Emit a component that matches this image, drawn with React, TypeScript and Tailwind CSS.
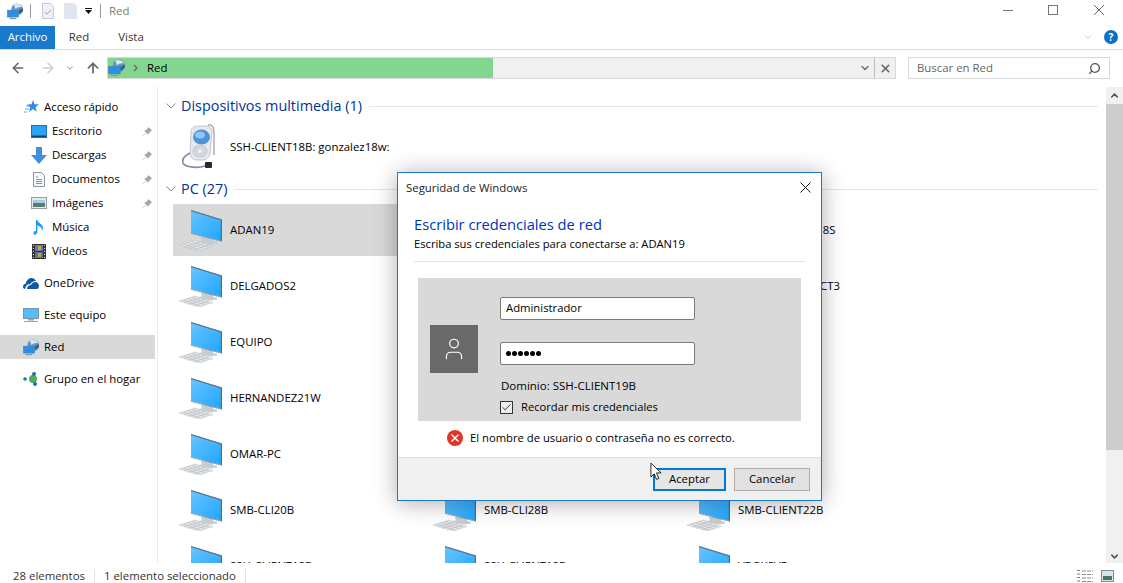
import { ArrowLeft, ArrowRight, ArrowUp, Check, ChevronDown, ChevronUp, Search, User, X } from 'lucide-react';

const font = "font-['Open_Sans','Noto_Sans',sans-serif]";

const NetIcon = ({ size = 20 }: { size?: number }) => (
  <svg width={size} height={size} viewBox="0 0 20 20" className="shrink-0">
    <circle cx="12" cy="7.500" r="7" fill="#5f97c6" />
    <path d="M8 2c3-2 8-1 10 3-3-1-6 0-8 2z" fill="#d8e7f3" />
    <path d="M12 10l6-4 1 3-4 4z" fill="#2f6496" />
    <rect x="0.500" y="8.500" width="13" height="8" fill="#2492ea" stroke="#58809f" strokeWidth="0.800" />
    <rect x="3" y="17.500" width="8" height="1.500" fill="#7f98ad" />
  </svg>
);

const PcIcon = () => (
  <svg width="44" height="41" viewBox="0 0 44 41" className="shrink-0">
    <defs>
      <linearGradient id="pcScreen" x1="0" y1="0" x2="1" y2="1">
        <stop offset="0" stopColor="#69c4ff" />
        <stop offset="1" stopColor="#1ea6ff" />
      </linearGradient>
    </defs>
    <path d="M22 27h12v4l4 1v1.500l-6 1-13-2.500v-1l4-.5z" fill="#c6ccd1" />
    <path d="M12 0l31 9.500V31L12 23z" fill="url(#pcScreen)" />
    <path d="M12 0l31 9.500v1.200L12 1.200z" fill="#67747f" />
    <path d="M43 9.500V31l-1.200-.3V10z" fill="#5d6b76" />
    <path d="M12 23l31 8v.8L12 23.800z" fill="#7d8b96" />
    <path d="M0 35l16-5 18 6.500-13 4.500z" fill="#e3e5e7" stroke="#bcc1c5" strokeWidth="0.500" />
    <path d="M4 33.800l18 6.200M8 32.500l18 6.200M12 31.300l18 6.200M5 37l16-5M9 38.500l16-5M14 40l16-5" stroke="#aeb3b7" strokeWidth="0.500" />
  </svg>
);

const PhoneIcon = () => (
  <svg width="38" height="47" viewBox="0 0 38 47" className="shrink-0">
    <path d="M26 1c5-1 6 3 6 8v22" fill="none" stroke="#a09db9" strokeWidth="1.300" />
    <path d="M9 8c0-4 3-6 7-6h8c4 0 6 2 6 6l-2 21c0 4-4 7-8 7h-5c-4 0-7-3-7-7z" fill="#e6e8ec" stroke="#aab1bb" strokeWidth="0.700" />
    <ellipse cx="19.500" cy="13" rx="8.500" ry="7.500" fill="#4f92dc" />
    <ellipse cx="18" cy="11" rx="5" ry="3.500" fill="#98c6f2" />
    <ellipse cx="18" cy="27" rx="7" ry="6" fill="#d3d7db" stroke="#b7bcc1" strokeWidth="0.700" />
    <circle cx="18" cy="27" r="2" fill="#eef0f2" />
    <path d="M8 29C2 32 0 36 1 39c2 5 16 5 22 3" fill="none" stroke="#8c88a8" strokeWidth="1.800" />
    <rect x="23" y="38" width="7" height="6" rx="1" fill="#2a2a2a" />
  </svg>
);

const Pin = () => (
  <svg width="11" height="11" viewBox="0 0 12 12" className="shrink-0">
    <path d="M7 1l4 4-1.200.4-2.400 2.400-.2 2L5 7.400 1.400 11 1 10.600 4.600 7 2.200 4.800l2-.2 2.400-2.400z" fill="#a2a6aa" />
  </svg>
);

const StarIcon = () => (
  <svg width="15" height="14" viewBox="0 0 15 14" className="shrink-0">
    <path d="M9 0l1.500 4.200 4.500.2-3.500 2.800 1.200 4.500-3.800-2.600L5 12l1.300-4.600L3 4.600l4.500-.3z" fill="#2f8be6" />
    <path d="M2 6h3M1 9h4M0 12h3" stroke="#5ea9ee" strokeWidth="1" />
  </svg>
);

const DesktopIcon = () => (
  <svg width="16" height="13" viewBox="0 0 16 13" className="shrink-0">
    <rect x="0.500" y="0.500" width="15" height="12" fill="#29a4f2" stroke="#1f6eb5" />
    <rect x="1" y="10.500" width="14" height="1.500" fill="#17466e" />
  </svg>
);

const DownIcon = () => (
  <svg width="16" height="17" viewBox="0 0 16 17" className="shrink-0">
    <path d="M5 0h6v8h5l-8 9-8-9h5z" fill="#3f8fdc" />
  </svg>
);

const DocIcon = () => (
  <svg width="12" height="15" viewBox="0 0 12 15" className="shrink-0">
    <path d="M.5.5h8l3 3v11H.5z" fill="#f7f9fb" stroke="#8f979e" />
    <path d="M3 5h2M3 7.500h6M3 9.500h6M3 11.500h6" stroke="#5a9bd6" />
  </svg>
);

const PicIcon = () => (
  <svg width="16" height="12" viewBox="0 0 16 12" className="shrink-0">
    <rect x="0.500" y="0.500" width="15" height="11" fill="#dfeaf2" stroke="#9a9fa3" />
    <path d="M2 3h12v3H2z" fill="#a8cbe0" />
    <path d="M2 6h12v4H2z" fill="#5d7d6f" />
  </svg>
);

const MusicIcon = () => (
  <svg width="12" height="16" viewBox="0 0 12 16" className="shrink-0">
    <path d="M3 1h1.400c.4 3 5.600 4 5.600 8 0 1-.4 2-1 2.600.3-3-2.200-4.600-4.600-5.200V13c0 2-2 3-3.400 2.600C.4 15 0 13.500 1.200 12.500c.6-.5 1.300-.6 1.800-.4z" fill="#1b9cf0" />
  </svg>
);

const FilmIcon = () => (
  <svg width="14" height="15" viewBox="0 0 14 15" className="shrink-0">
    <rect width="14" height="15" fill="#333" />
    <path d="M1 1h1v1H1zM1 4h1v1H1zM1 7h1v1H1zM1 10h1v1H1zM1 13h1v1H1zM12 1h1v1h-1zM12 4h1v1h-1zM12 7h1v1h-1zM12 10h1v1h-1zM12 13h1v1h-1z" fill="#ddd" />
    <rect x="3" y="1" width="8" height="6" fill="#6178b8" />
    <rect x="3" y="8" width="8" height="6" fill="#5a6fa8" />
    <rect x="6" y="2" width="3" height="4" fill="#c9a23a" />
    <rect x="6" y="9" width="3" height="4" fill="#c9a23a" />
  </svg>
);

const CloudIcon = () => (
  <svg width="16" height="11" viewBox="0 0 16 11" className="shrink-0">
    <path d="M0 9c0-2 1-3 2.500-3.300C3.500 2 6 0 8.500 0c2 0 3.500 1 4.500 3-3 0-5 1.500-6 3.500C5 6 3 6.500 2 11 .8 10.800 0 10 0 9z" fill="#0f5aa8" />
    <path d="M4 11c0-2.500 2-4 4-4 1-2 2.500-3 4.500-3 1.500 0 3.500 1.500 3.500 4 0 1.500-1 3-2 3z" fill="#0f5aa8" />
  </svg>
);

const ThisPcIcon = () => (
  <svg width="16" height="15" viewBox="0 0 16 15" className="shrink-0">
    <rect x="0.500" y="0.500" width="15" height="10" fill="#55bcf5" stroke="#7d93a5" />
    <rect x="5" y="11" width="6" height="1.500" fill="#9aa5ae" />
    <rect x="1" y="13" width="14" height="1" fill="#9aa5ae" />
  </svg>
);

const HomeGroupIcon = () => (
  <svg width="16" height="14" viewBox="0 0 16 14" className="shrink-0">
    <circle cx="2" cy="7" r="1.800" fill="#1c6fb8" />
    <circle cx="10" cy="7" r="4" fill="#4bb05a" />
    <circle cx="11" cy="2" r="2" fill="#1c6fb8" />
    <circle cx="12" cy="12" r="2" fill="#1c6fb8" />
  </svg>
);

const Tree = ({ icon, label, pinned, indent, active, className = '' }: { icon: React.ReactNode; label: string; pinned?: boolean; indent?: boolean; active?: boolean; className?: string }) => (
  <div className={`flex h-6 w-[155px] items-center ${active ? 'bg-[#d9d9d9]' : ''} ${className}`}>
    <div className={`flex w-4 shrink-0 items-center justify-center ${indent ? 'ml-[31px]' : 'ml-[23px]'}`}>{icon}</div>
    <span className={`ml-[5px] flex-1 text-[11.4px] text-black ${font}`}>{label}</span>
    {pinned && <span className="mr-[2px]"><Pin /></span>}
  </div>
);

const Computer = ({ name, selected }: { name: string; selected?: boolean }) => (
  <div className={`flex h-[52px] w-[254px] shrink-0 items-center pl-[6px] ${selected ? 'bg-[#d9d9d9]' : ''}`}>
    <PcIcon />
    <span className={`ml-[7px] whitespace-nowrap text-[11.4px] text-black ${font}`}>{name}</span>
  </div>
);

const GroupHeader = ({ label, y }: { label: string; y: string }) => (
  <div className={`mr-[25px] flex h-5 shrink-0 items-center ${y}`}>
    <svg width="10" height="6" viewBox="0 0 10 6" className="shrink-0"><path d="M.5.5L5 5 9.500.5" fill="none" stroke="#8a8a8a" /></svg>
    <span className={`ml-[5px] text-[14.4px] leading-5 text-[#003399] ${font}`}>{label}</span>
    <div className="ml-[7px] h-px flex-1 bg-[#e5e5e5]" />
  </div>
);

const rows = [
  ['ADAN19', '', 'SERVIDOR-SSH18S'],
  ['DELGADOS2', '', 'SERVIDOR-SSH-CT3'],
  ['EQUIPO', '', ''],
  ['HERNANDEZ21W', '', ''],
  ['OMAR-PC', '', ''],
  ['SMB-CLI20B', 'SMB-CLI28B', 'SMB-CLIENT22B'],
  ['SSH-CLIENT18B', 'SSH-CLIENT19B', 'VBOXSVR'],
];

export default function App() {
  return (
    <div className={`flex h-[583px] w-[1123px] flex-col overflow-hidden bg-white text-black ${font}`}>
      {/* barra de titulo */}
      <div className="flex h-[22px] shrink-0 items-center pl-[7px]">
        <NetIcon size={17} />
        <div className="ml-[6px] h-[14px] w-px bg-[#9a9a9a]" />
        <svg width="12" height="16" viewBox="0 0 12 16" className="ml-[11px]"><path d="M.5.5h8l3 3v12H.5z" fill="#eef2f7" stroke="#c0cad6" /><path d="M3 9l2 2 4-4" fill="none" stroke="#9aa7b5" /></svg>
        <svg width="13" height="16" viewBox="0 0 13 16" className="ml-[10px]"><path d="M0 0h10l3 3v13H0z" fill="#dfe6f1" /></svg>
        <svg width="7" height="6" viewBox="0 0 7 6" className="ml-[8px]"><path d="M0 0h7v1H0zM0 2h7L3.500 6z" fill="#111" /></svg>
        <div className="ml-[8px] h-[14px] w-px bg-[#9a9a9a]" />
        <span className="ml-2 text-[11.4px] text-[#7a7a7a]">Red</span>
        <div className="mb-[2px] ml-auto flex items-center pr-[19px]">
          <div className="h-px w-[10px] bg-[#777]" />
          <div className="ml-[35px] h-[10px] w-[10px] border border-[#777]" />
          <svg width="10" height="10" viewBox="0 0 10 10" className="ml-[36px]"><path d="M0 0l10 10M10 0L0 10" stroke="#666" /></svg>
        </div>
      </div>

      {/* cinta */}
      <div className="flex h-[28px] shrink-0 items-center border-b border-[#dcdcdc] pt-[3px]">
        <div className="flex h-[23px] w-[55px] items-center justify-center bg-[#1979ca] text-[11.4px] text-white">Archivo</div>
        <div className="w-[48px] text-center text-[11.4px] text-[#333]">Red</div>
        <div className="ml-[3px] w-[50px] text-center text-[11.4px] text-[#333]">Vista</div>
        <ChevronDown className="ml-auto h-[12px] w-[12px] text-[#aaa]" strokeWidth={1.200} />
        <div className="mr-[5px] ml-[10px] flex h-[14px] w-[14px] items-center justify-center rounded-full bg-[#0f6fc6] text-[10px] font-bold text-white">?</div>
      </div>

      {/* direcciones */}
      <div className="flex h-[36px] shrink-0 items-center">
        <ArrowLeft className="ml-[10px] h-[16px] w-[16px] text-[#666]" strokeWidth={2.200} />
        <ArrowRight className="ml-[14px] h-[16px] w-[16px] text-[#ccc]" strokeWidth={2.200} />
        <ChevronDown className="ml-[9px] h-[10px] w-[10px] text-[#777]" strokeWidth={2} />
        <ArrowUp className="ml-[10px] h-[16px] w-[16px] text-[#666]" strokeWidth={2.600} />
        <div className="ml-[6px] flex h-[22px] w-[789px] items-center border border-[#d9d9d9] bg-[#f0f0f0]">
          <div className="flex h-full w-[385px] items-center bg-[#83d68f]">
            <NetIcon size={18} />
            <svg width="5" height="8" viewBox="0 0 5 8" className="ml-[7px]"><path d="M1 1l3 3-3 3" fill="none" stroke="#666" strokeWidth="1.200" /></svg>
            <span className="ml-[9px] text-[11.4px] text-black">Red</span>
          </div>
          <ChevronDown className="mr-[3px] ml-auto h-[12px] w-[12px] text-[#666]" strokeWidth={2.600} />
          <div className="flex h-full w-[21px] items-center justify-center border-l border-[#bdbdbd]">
            <X className="h-[13px] w-[13px] text-[#666]" strokeWidth={3} />
          </div>
        </div>
        <div className="ml-[12px] flex h-[22px] w-[202px] items-center justify-between border border-[#d9d9d9] pr-[8px] pl-[8px] text-[11.4px] text-[#666]">
          <span>Buscar en Red</span>
          <Search className="h-[13px] w-[13px] -scale-x-100 text-[#555]" strokeWidth={2.400} />
        </div>
      </div>

      {/* cuerpo */}
      <div className="flex min-h-0 flex-1">
        <div className="flex w-[158px] shrink-0 flex-col border-r border-[#ececec] pt-[9px]">
          <Tree icon={<StarIcon />} label="Acceso rápido" />
          <Tree indent pinned icon={<DesktopIcon />} label="Escritorio" />
          <Tree indent pinned icon={<DownIcon />} label="Descargas" />
          <Tree indent pinned icon={<DocIcon />} label="Documentos" />
          <Tree indent pinned icon={<PicIcon />} label="Imágenes" />
          <Tree indent icon={<MusicIcon />} label="Música" />
          <Tree indent icon={<FilmIcon />} label="Vídeos" />
          <Tree className="mt-2" icon={<CloudIcon />} label="OneDrive" />
          <Tree className="mt-2" icon={<ThisPcIcon />} label="Este equipo" />
          <Tree className="mt-2" active icon={<NetIcon size={17} />} label="Red" />
          <Tree className="mt-2" icon={<HomeGroupIcon />} label="Grupo en el hogar" />
        </div>

        <div className="relative flex min-w-0 flex-1 flex-col overflow-hidden pl-[8px]">
          <GroupHeader y="mt-[10px]" label="Dispositivos multimedia (1)" />
          <div className="flex h-[62px] shrink-0 items-center pl-[16px]">
            <PhoneIcon />
            <span className="ml-[10px] text-[11.4px]">SSH-CLIENT18B: gonzalez18w:</span>
          </div>
          <GroupHeader y="mt-[1px]" label="PC (27)" />
          <div className="mt-[5px] ml-[7px] flex shrink-0 flex-col gap-1">
            {rows.map((r, i) => (
              <div key={r[0]} className="flex">
                <Computer name={r[0]} selected={i === 0} />
                <Computer name={r[1]} />
                <Computer name={r[2]} />
              </div>
            ))}
          </div>

          {/* barra de desplazamiento */}
          <div className="absolute top-[1px] right-0 bottom-0 flex w-[17px] flex-col items-center bg-[#f0f0f0]">
            <ChevronUp className="mt-[3px] h-[11px] w-[11px] text-[#555]" strokeWidth={3.400} />
            <div className="mt-[3px] h-[346px] w-full bg-[#cdcdcd]" />
            <ChevronDown className="mt-auto mb-[1px] h-[11px] w-[11px] text-[#555]" strokeWidth={3.400} />
          </div>
        </div>
      </div>

      {/* estado */}
      <div className="flex h-[20px] shrink-0 items-center bg-white pt-[6px] text-[11.4px] text-[#333]">
        <span className="ml-[13px] w-[81px]">28 elementos</span>
        <div className="h-[14px] w-px bg-[#e2e2e2]" />
        <span className="ml-[9px] w-[141px]">1 elemento seleccionado</span>
        <div className="h-[14px] w-px bg-[#e2e2e2]" />
        <svg width="16" height="12" viewBox="0 0 16 12" className="ml-auto"><path d="M0 .5h3M0 4h3M0 7.500h3M0 11h3" stroke="#b06a6a" /><path d="M5 1h11M5 4.500h11M5 8h11M5 11.500h11" stroke="#8a8a8a" strokeDasharray="4 1" /></svg>
        <svg width="13" height="12" viewBox="0 0 13 12" className="mr-[9px] ml-[8px]"><rect x="0.500" y="0.500" width="12" height="11" fill="#d5e5ee" stroke="#8a8a8a" /><rect x="2" y="6" width="9" height="4" fill="#4d7563" /></svg>
      </div>

      {/* dialogo */}
      <div className={`absolute top-[172px] left-[397px] flex h-[329px] w-[425px] flex-col border border-[#1979ca] bg-white shadow-[0_2px_22px_rgba(0,0,0,0.32)] ${font}`}>
        <div className="flex h-[29px] shrink-0 items-center justify-between pr-[10px] pl-2 text-[11.4px] text-[#222]">
          <span>Seguridad de Windows</span>
          <svg width="11" height="11" viewBox="0 0 11 11"><path d="M.5.5l10 10M10.500.5l-10 10" stroke="#111" /></svg>
        </div>
        <div className="mx-4 mt-[12px] border-b border-[#e3e3e3] pb-[7px]">
          <div className="text-[14.700px] leading-5 text-[#0033bc]">Escribir credenciales de red</div>
          <div className="text-[11.200px] leading-5 text-black">Escriba sus credenciales para conectarse a: ADAN19</div>
        </div>
        <div className="mx-5 mt-4 flex h-[143px] shrink-0 items-start bg-[#d9d9d9] pl-3">
          <div className="mt-[47px] flex h-[48px] w-[48px] shrink-0 items-center justify-center bg-[#696969]">
            <User className="h-[26px] w-[26px] text-white" strokeWidth={1.100} />
          </div>
          <div className="ml-[22px] flex flex-col pt-[19px]">
            <div className="flex h-[23px] w-[195px] items-center rounded-[2px] border border-[#7a7a7a] bg-white px-[5px] text-[11.300px]">Administrador</div>
            <div className="mt-[22px] flex h-[23px] w-[195px] items-center gap-[1px] rounded-[2px] border border-[#7a7a7a] bg-white px-[5px]">
              {[0, 1, 2, 3, 4, 5].map((d) => <span key={d} className="h-[5px] w-[5px] rounded-full bg-black" />)}
            </div>
            <div className="mt-[13px] pl-[1px] text-[11.500px] leading-4">Dominio: SSH-CLIENT19B</div>
            <div className="mt-[5px] flex items-center text-[11.200px] leading-4">
              <div className="flex h-[13px] w-[13px] items-center justify-center border border-[#333] bg-[#eeeeee]"><Check className="h-[11px] w-[11px] text-[#333]" strokeWidth={2} /></div>
              <span className="ml-[8px]">Recordar mis credenciales</span>
            </div>
          </div>
        </div>
        <div className="mt-[9px] flex items-center pl-[49px] text-[11.250px]">
          <div className="flex h-4 w-4 items-center justify-center rounded-full bg-[#e0352b]"><X className="h-3 w-3 text-white" strokeWidth={3} /></div>
          <span className="ml-[7px]">El nombre de usuario o contraseña no es correcto.</span>
        </div>
        <div className="mt-auto flex h-[43px] items-center justify-end border-t border-[#dfdfdf] bg-[#f0f0f0] pr-[11px] text-[11.400px]">
          <div className="flex h-[23px] w-[73px] items-center justify-center border-2 border-[#0078d7] bg-[#e5e5e5]">Aceptar</div>
          <div className="ml-[8px] flex h-[23px] w-[76px] items-center justify-center border border-[#adadad] bg-[#e1e1e1]">Cancelar</div>
        </div>
        <svg width="13" height="19" viewBox="0 0 14 20" className="absolute top-[289px] left-[252px]">
          <path d="M1 1v15l3.500-3.500 2.500 6 2.500-1-2.500-6h5z" fill="#fff" stroke="#000" strokeWidth="0.900" />
        </svg>
      </div>
    </div>
  );
}
